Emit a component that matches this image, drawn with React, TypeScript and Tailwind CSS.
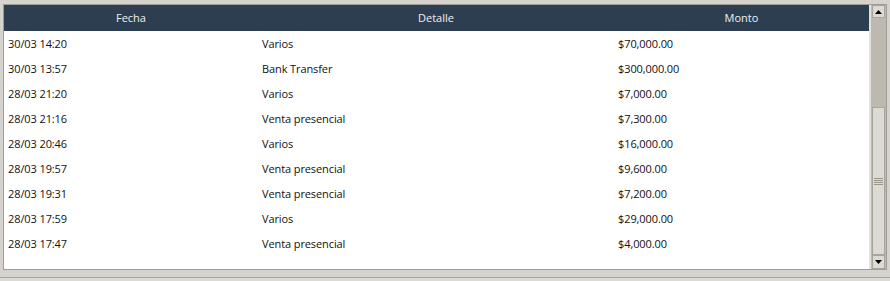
import React from "react";

const rows = [
  ["30/03 14:20", "Varios", "$70,000.00"],
  ["30/03 13:57", "Bank Transfer", "$300,000.00"],
  ["28/03 21:20", "Varios", "$7,000.00"],
  ["28/03 21:16", "Venta presencial", "$7,300.00"],
  ["28/03 20:46", "Varios", "$16,000.00"],
  ["28/03 19:57", "Venta presencial", "$9,600.00"],
  ["28/03 19:31", "Venta presencial", "$7,200.00"],
  ["28/03 17:59", "Varios", "$29,000.00"],
  ["28/03 17:47", "Venta presencial", "$4,000.00"],
];

function Arrow({ up }: { up?: boolean }) {
  return (
    <svg width="7" height="4" viewBox="0 0 7 4">
      {up ? <polygon points="3.5,0 7,4 0,4" fill="#000" /> : <polygon points="0,0 7,0 3.5,4" fill="#000" />}
    </svg>
  );
}

function ScrollBar() {
  return (
    <div className="w-[17px] h-full flex flex-col bg-[#bdb9b0] border-l border-[#e4e2dd]">
      <div className="h-[13px] mx-[1px] flex items-center justify-center bg-[#dcdad5] border border-[#a8a49c]">
        <Arrow up />
      </div>
      <div className="h-[89px]" />
      <div className="h-[148px] mx-[1px] flex flex-col items-center justify-center gap-[1px] bg-[#dcdad5] border border-[#a8a49c]">
        <div className="w-[9px] h-[1px] bg-[#9a968e]" />
        <div className="w-[9px] h-[1px] bg-[#9a968e]" />
        <div className="w-[9px] h-[1px] bg-[#9a968e]" />
        <div className="w-[9px] h-[1px] bg-[#9a968e]" />
      </div>
      <div className="flex-1" />
      <div className="h-[14px] mx-[1px] flex items-center justify-center bg-[#dcdad5] border border-[#a8a49c]">
        <Arrow />
      </div>
    </div>
  );
}

export default function App() {
  return (
    <div
      className="w-[890px] h-[281px] bg-[#d6d3ce] flex flex-col overflow-hidden"
      style={{ fontFamily: '"Open Sans", "Noto Sans", sans-serif' }}
    >
      <div className="mt-[4px] ml-[3px] w-[884px] h-[266px] border border-[#a09d97] bg-white flex">
        <div className="w-[865px] flex flex-col">
          <div className="grid grid-cols-[254px_356px_255px] h-[26px] bg-[#2c3e50] text-[#eef0f2] text-[11px] items-center">
            <div className="text-center">Fecha</div>
            <div className="text-center">Detalle</div>
            <div className="text-center">Monto</div>
          </div>
          {rows.map((r, i) => (
            <div key={i} className="grid grid-cols-[254px_356px_255px] h-[25px] pt-[2px] items-center text-[11px] tracking-[-0.1px] text-[#111]">
              <div className="pl-[4px]">{r[0]}</div>
              <div className="pl-[4px]">{r[1]}</div>
              <div className="pl-[4px]">{r[2]}</div>
            </div>
          ))}
        </div>
        <div className="w-[1px] bg-[#e4e2dd]" />
        <ScrollBar />
      </div>
      <div className="mt-[7px] border-t border-[#a8a59e] flex-1 bg-[#dcdad5]" />
    </div>
  );
}
